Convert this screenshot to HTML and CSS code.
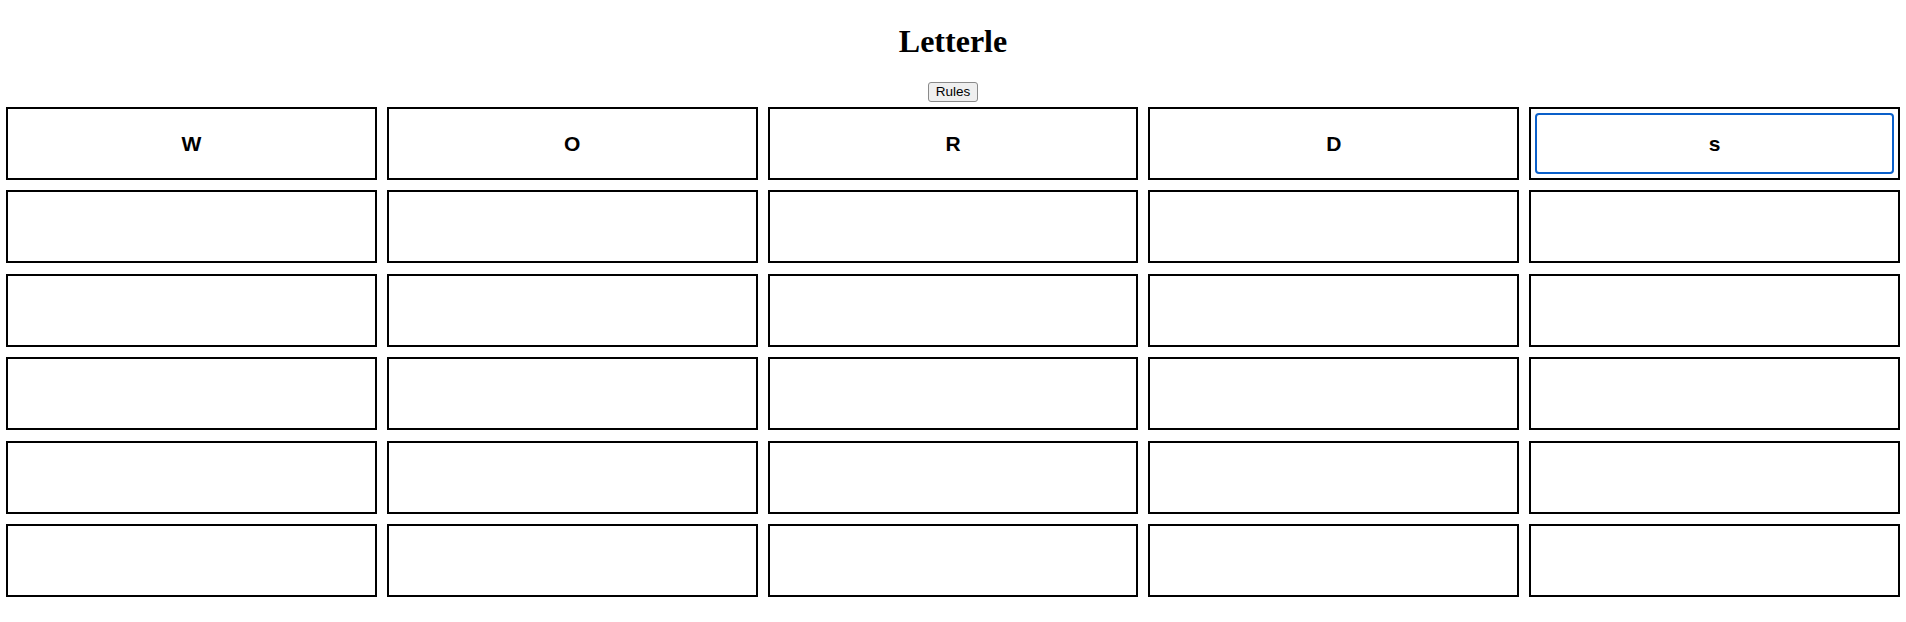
FILE: index.html
```html
<!DOCTYPE html>
<html lang="en">
<head>
<meta charset="utf-8">
<title>Letterle</title>
<link rel="stylesheet" href="styles.css">
</head>
<body>
<h1 class="title">Letterle</h1>
<div class="controls"><button class="rules-btn" type="button">Rules</button></div>
<div class="board">
  <div class="cell"><input class="tile" value="W" maxlength="1"></div>
  <div class="cell"><input class="tile" value="O" maxlength="1"></div>
  <div class="cell"><input class="tile" value="R" maxlength="1"></div>
  <div class="cell"><input class="tile" value="D" maxlength="1"></div>
  <div class="cell"><input class="tile tile-focus" value="s" maxlength="1"></div>

  <div class="cell"><input class="tile" maxlength="1"></div>
  <div class="cell"><input class="tile" maxlength="1"></div>
  <div class="cell"><input class="tile" maxlength="1"></div>
  <div class="cell"><input class="tile" maxlength="1"></div>
  <div class="cell"><input class="tile" maxlength="1"></div>

  <div class="cell"><input class="tile" maxlength="1"></div>
  <div class="cell"><input class="tile" maxlength="1"></div>
  <div class="cell"><input class="tile" maxlength="1"></div>
  <div class="cell"><input class="tile" maxlength="1"></div>
  <div class="cell"><input class="tile" maxlength="1"></div>

  <div class="cell"><input class="tile" maxlength="1"></div>
  <div class="cell"><input class="tile" maxlength="1"></div>
  <div class="cell"><input class="tile" maxlength="1"></div>
  <div class="cell"><input class="tile" maxlength="1"></div>
  <div class="cell"><input class="tile" maxlength="1"></div>

  <div class="cell"><input class="tile" maxlength="1"></div>
  <div class="cell"><input class="tile" maxlength="1"></div>
  <div class="cell"><input class="tile" maxlength="1"></div>
  <div class="cell"><input class="tile" maxlength="1"></div>
  <div class="cell"><input class="tile" maxlength="1"></div>

  <div class="cell"><input class="tile" maxlength="1"></div>
  <div class="cell"><input class="tile" maxlength="1"></div>
  <div class="cell"><input class="tile" maxlength="1"></div>
  <div class="cell"><input class="tile" maxlength="1"></div>
  <div class="cell"><input class="tile" maxlength="1"></div>
</div>
</body>
</html>
```

FILE: styles.css
```css
html, body {
  margin: 0;
  padding: 0;
  background: #ffffff;
}

body {
  font-family: "Liberation Serif", "Times New Roman", serif;
  color: #000;
}

.title {
  font-family: "Liberation Serif", "Times New Roman", serif;
  font-size: 32px;
  font-weight: bold;
  line-height: 37px;
  text-align: center;
  margin: 23px 0 22px 0;
}

.controls {
  display: flex;
  justify-content: center;
  margin-bottom: 5px;
}

.rules-btn {
  box-sizing: border-box;
  width: 50px;
  height: 20px;
  padding: 0 5px;
  font-family: "Liberation Sans", Arial, sans-serif;
  font-size: 13.5px;
  line-height: 18px;
  color: #000;
  background: #efefef;
  border: 1px solid #8a8a8a;
  border-radius: 3px;
}

.board {
  display: grid;
  grid-template-columns: repeat(5, 1fr);
  grid-auto-rows: 73px;
  column-gap: 10px;
  row-gap: 10.4px;
  padding: 0 6px;
}

.cell {
  box-sizing: border-box;
  border: 2px solid #000;
  padding: 4px;
  display: flex;
}

.tile {
  box-sizing: border-box;
  flex: 1;
  width: 100%;
  min-width: 0;
  margin: 0;
  padding: 0;
  border: 2px solid transparent;
  border-radius: 4px;
  background: transparent;
  outline: none;
  text-align: center;
  font-family: "Liberation Sans", Arial, sans-serif;
  font-weight: bold;
  font-size: 21px;
  color: #000;
}

.tile-focus {
  border-color: #0a5fc9;
}
```
